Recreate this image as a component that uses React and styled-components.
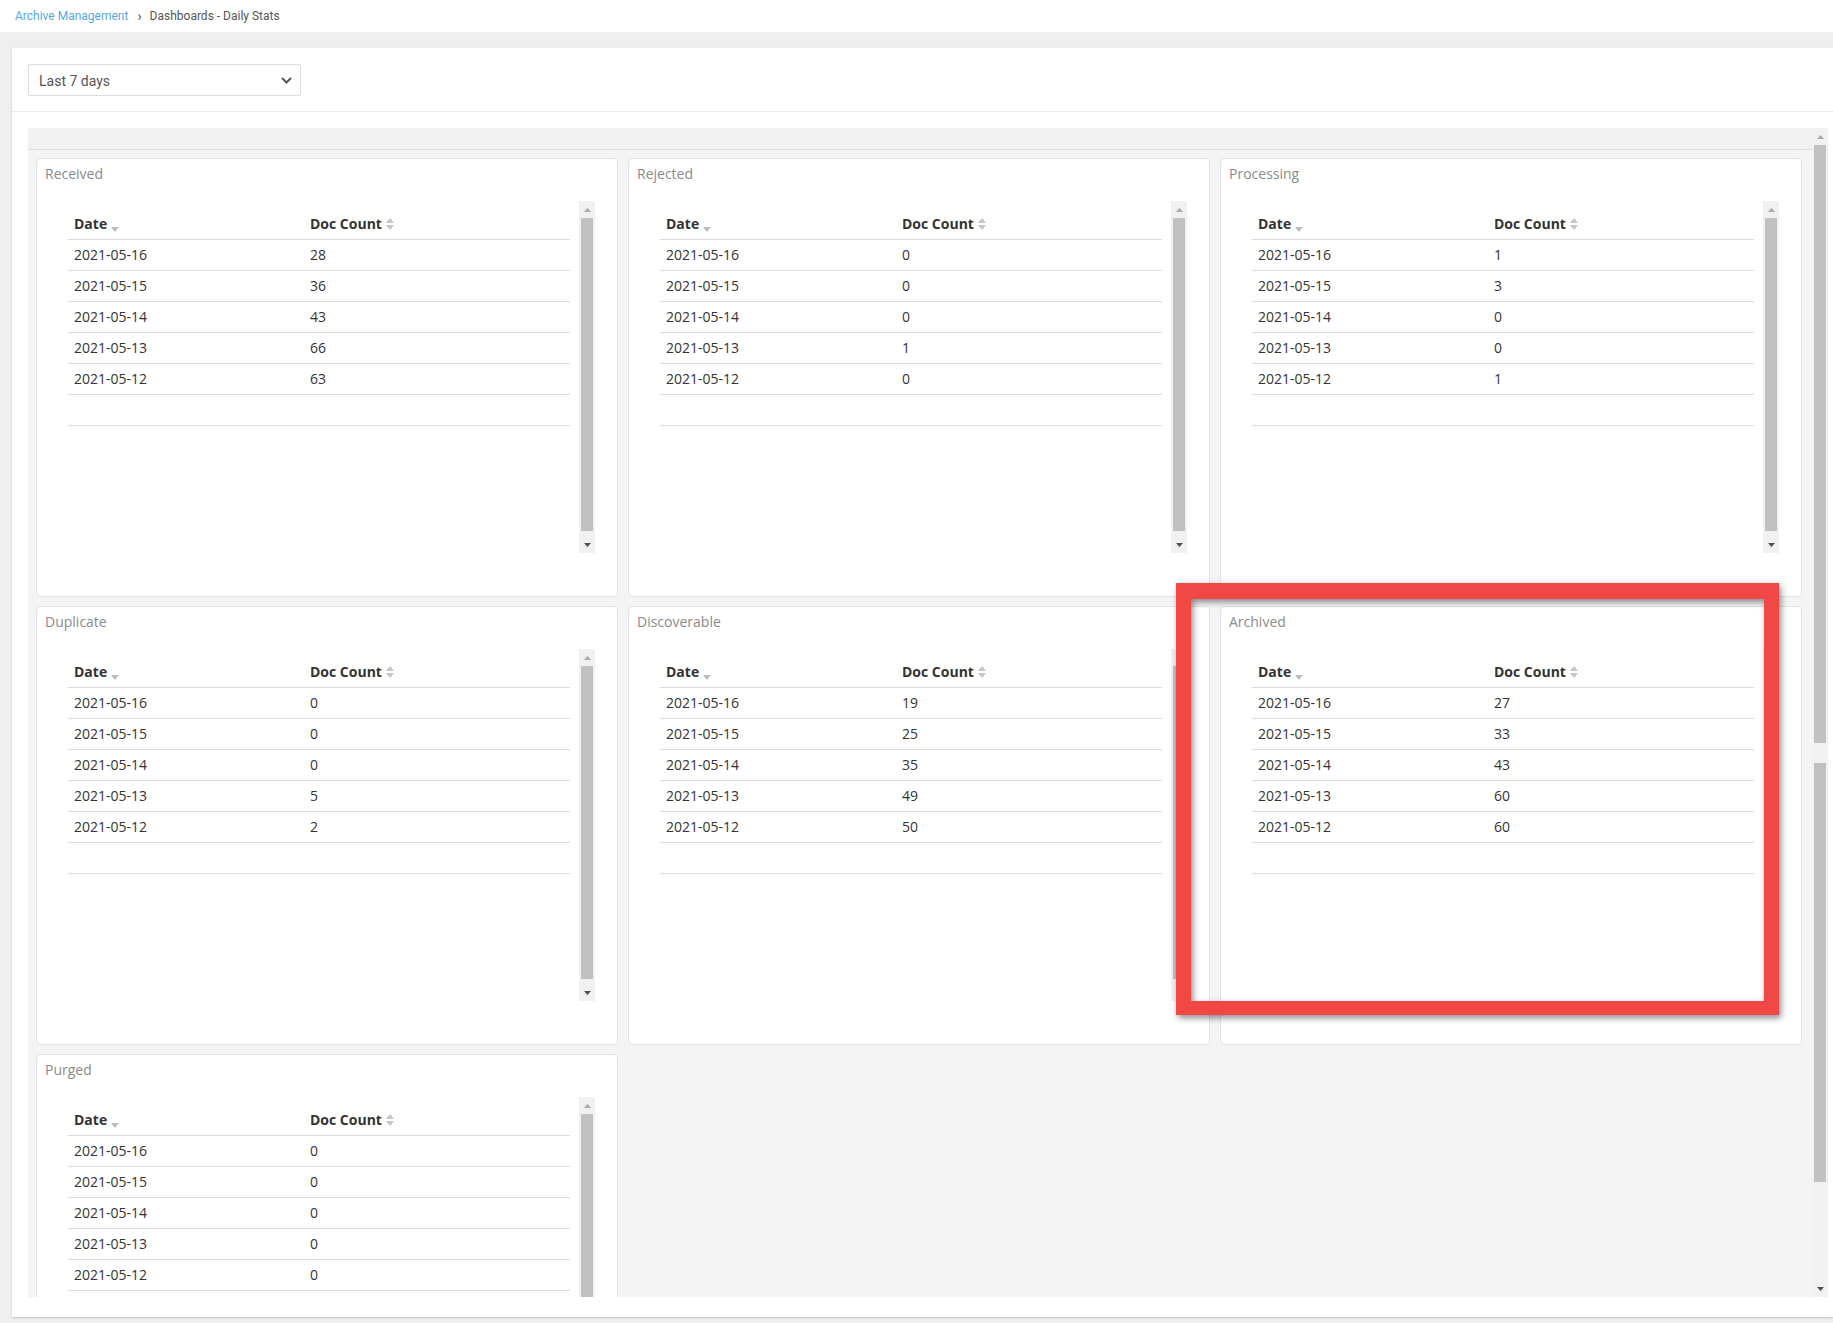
import React from 'react'
import styled, { createGlobalStyle } from 'styled-components'

const GlobalStyle = createGlobalStyle`
  html, body {
    margin: 0;
    padding: 0;
    background: #efefef;
    overflow: hidden;
  }
  body {
    font-family: 'Open Sans', 'Liberation Sans', sans-serif;
  }
`

const dates = ['2021-05-16', '2021-05-15', '2021-05-14', '2021-05-13', '2021-05-12']

const stats = [
  { title: 'Received', counts: [28, 36, 43, 66, 63] },
  { title: 'Rejected', counts: [0, 0, 0, 1, 0] },
  { title: 'Processing', counts: [1, 3, 0, 0, 1] },
  { title: 'Duplicate', counts: [0, 0, 0, 5, 2] },
  { title: 'Discoverable', counts: [19, 25, 35, 49, 50] },
  { title: 'Archived', counts: [27, 33, 43, 60, 60] },
  { title: 'Purged', counts: [0, 0, 0, 0, 0] }
]

const DownCaret = () => (
  <svg width='8' height='5' viewBox='0 0 8 5'>
    <path d='M0 0h8L4 5z' fill='#bdbdbd' />
  </svg>
)

const SortBoth = () => (
  <svg width='8' height='12' viewBox='0 0 8 12'>
    <path d='M4 0l4 5H0z M0 7h8l-4 5z' fill='#c6c6c6' />
  </svg>
)

const Chevron = () => (
  <svg width='11' height='7' viewBox='0 0 11 7'>
    <path d='M1 1l4.5 4.5L10 1' stroke='#555' strokeWidth='2' fill='none' />
  </svg>
)

const ArrowUp = ({ color }) => (
  <svg width='7' height='4' viewBox='0 0 7 4'>
    <path d='M3.5 0L7 4H0z' fill={color} />
  </svg>
)

const ArrowDown = ({ color }) => (
  <svg width='7' height='4' viewBox='0 0 7 4'>
    <path d='M0 0h7L3.5 4z' fill={color} />
  </svg>
)

const Scrollbar = ({ thumbs }) => (
  <Track>
    <ArrowButton><ArrowUp color='#a8a8a8' /></ArrowButton>
    {thumbs.map((t, i) => t.gap
      ? <TrackGap key={i} $h={t.gap} />
      : <Thumb key={i} $h={t.h} />)}
    <TrackFill />
    <ArrowButton><ArrowDown color='#505050' /></ArrowButton>
  </Track>
)

const StatCard = ({ title, counts }) => (
  <Card>
    <CardTitle>{title}</CardTitle>
    <ScrollArea>
      <TableWrap>
        <Table>
          <thead>
            <tr>
              <Th $w='224px'>Date<SortIcon><DownCaret /></SortIcon></Th>
              <Th>Doc Count<SortIcon $both><SortBoth /></SortIcon></Th>
            </tr>
          </thead>
          <tbody>
            {dates.map((d, i) => (
              <tr key={d}>
                <Td>{d}</Td>
                <Td>{counts[i]}</Td>
              </tr>
            ))}
            <tr>
              <Td>&nbsp;</Td>
              <Td />
            </tr>
          </tbody>
        </Table>
      </TableWrap>
      <Scrollbar thumbs={[{ h: 313 }]} />
    </ScrollArea>
  </Card>
)

const App = () => {
  return (<Page>
    <GlobalStyle />
    <TopBar>
      <Crumb href='#'>Archive Management</Crumb>
      <CrumbSep>›</CrumbSep>
      <CrumbCurrent>Dashboards - Daily Stats</CrumbCurrent>
    </TopBar>
    <Panel>
      <Toolbar>
        <Select>
          <span>Last 7 days</span>
          <Chevron />
        </Select>
      </Toolbar>
      <Body>
        <Content>
          <Strip />
          <Grid>
            {stats.map((s) => <StatCard key={s.title} {...s} />)}
          </Grid>
        </Content>
        <Scrollbar thumbs={[{ h: 598 }, { gap: 20 }, { h: 419 }]} />
      </Body>
    </Panel>
    {/* red annotation frame round the Archived card */}
    <Highlight />
  </Page>)
}

const Page = styled.div`
  position: relative;
  width: 1833px;
  height: 1323px;
  overflow: hidden;
`

const TopBar = styled.div`
  display: flex;
  align-items: center;
  height: 32px;
  padding-left: 15px;
  background: #fff;
  font-family: Roboto, 'Liberation Sans', sans-serif;
  font-size: 12px;
`

const Crumb = styled.a`
  color: #5ba6dc;
  text-decoration: none;
`

const CrumbSep = styled.span`
  margin: 0 8px 0 9px;
  color: #555;
  font-size: 14px;
`

const CrumbCurrent = styled.span`
  color: #555;
`

const Panel = styled.div`
  margin: 16px 0 0 12px;
  background: #fff;
  box-shadow: 0 1px 2px rgba(0, 0, 0, 0.18);
`

const Toolbar = styled.div`
  padding: 16px 16px 15px;
  border-bottom: 1px solid #ececec;
`

const Select = styled.div`
  display: flex;
  align-items: center;
  justify-content: space-between;
  box-sizing: border-box;
  width: 273px;
  height: 32px;
  padding: 1px 8px 0 10px;
  border: 1px solid #dcdcdc;
  border-radius: 2px;
  font-family: Roboto, 'Liberation Sans', sans-serif;
  font-size: 14px;
  color: #555;
`

const Body = styled.div`
  display: flex;
  height: 1169px;
  padding: 16px 5px 20px 16px;
`

const Content = styled.div`
  flex: 1;
  overflow: hidden;
  background: #f4f4f4;
`

const Strip = styled.div`
  height: 21px;
  background: #f1f1f1;
  border-bottom: 1px solid #e0e0e0;
`

const Grid = styled.div`
  display: grid;
  grid-template-columns: repeat(3, 582px);
  grid-auto-rows: 439px;
  row-gap: 9px;
  column-gap: 10px;
  padding: 8px 0 0 8px;
`

const Card = styled.div`
  display: flex;
  flex-direction: column;
  box-sizing: border-box;
  background: #fff;
  border: 1px solid #e3e3e3;
  border-radius: 4px;
`

const CardTitle = styled.div`
  padding: 5px 0 0 8px;
  font-size: 14px;
  line-height: 20px;
  color: #8a8a8a;
`

const ScrollArea = styled.div`
  display: flex;
  height: 352px;
  margin: 17px 22px 0 31px;
`

const TableWrap = styled.div`
  flex: 1;
  padding-top: 8px;
  margin-right: 9px;
`

const Table = styled.table`
  width: 100%;
  border-collapse: separate;
  border-spacing: 0;
  color: #333;
  font-size: 14px;
`

const Th = styled.th`
  width: ${(p) => p.$w || 'auto'};
  padding: 0 6px;
  line-height: 30px;
  text-align: left;
  font-weight: 700;
  border-bottom: 1px solid #dadada;
  white-space: nowrap;
`

const SortIcon = styled.span`
  display: inline-block;
  margin-left: 4px;
  vertical-align: ${(p) => (p.$both ? '-1px' : '-3px')};
  line-height: 0;
`

const Td = styled.td`
  padding: 0 6px;
  line-height: 30px;
  border-bottom: 1px solid #dedede;
`

const Track = styled.div`
  display: flex;
  flex-direction: column;
  width: 16px;
  flex-shrink: 0;
  background: #f1f1f1;
`

const ArrowButton = styled.div`
  display: flex;
  align-items: center;
  justify-content: center;
  height: 17px;
  flex-shrink: 0;
`

const Thumb = styled.div`
  height: ${(p) => p.$h}px;
  margin: 0 2px;
  background: #c1c1c1;
  flex-shrink: 0;
`

const TrackGap = styled.div`
  height: ${(p) => p.$h}px;
  flex-shrink: 0;
`

const TrackFill = styled.div`
  flex: 1;
`

const Highlight = styled.div`
  position: absolute;
  left: 1176px;
  top: 583px;
  width: 603px;
  height: 432px;
  box-sizing: border-box;
  border: 15px solid #f24747;
  border-top-width: 16px;
  border-bottom-width: 14px;
  filter: drop-shadow(2px 3px 3px rgba(0, 0, 0, 0.45));
  pointer-events: none;
`

export default App
